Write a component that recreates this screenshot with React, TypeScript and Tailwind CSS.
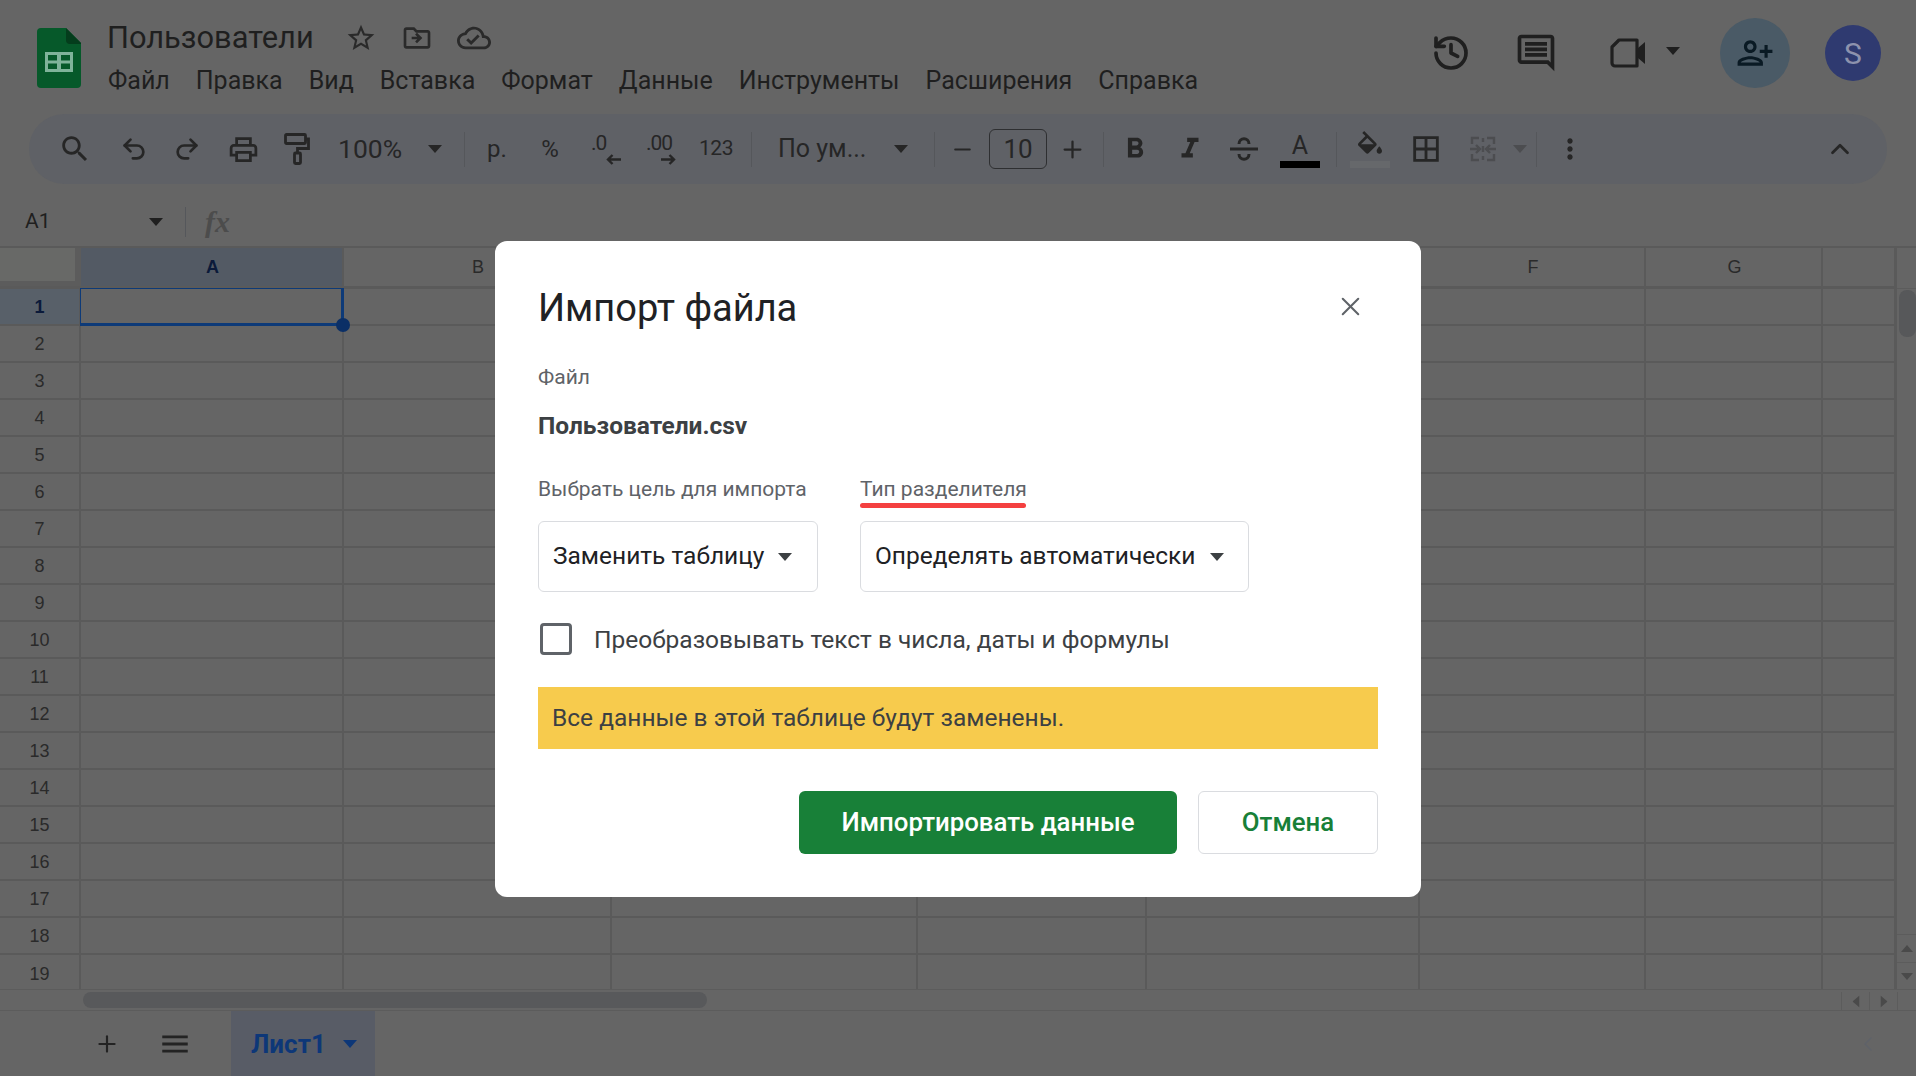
import React from "react";
import { History, Undo2, Redo2, X, ChevronUp, ChevronLeft, Plus, Minus } from "lucide-react";

const P: Record<string, string> = {
  search: "M15.5 14h-.79l-.28-.27C15.41 12.59 16 11.11 16 9.5 16 5.91 13.09 3 9.5 3S3 5.91 3 9.5 5.91 16 9.5 16c1.61 0 3.09-.59 4.23-1.57l.27.28v.79l5 4.99L20.49 19l-4.99-5zm-6 0C7.01 14 5 11.99 5 9.5S7.01 5 9.5 5 14 7.01 14 9.5 11.99 14 9.5 14z",
  print: "M19 8h-1V3H6v5H5c-1.66 0-3 1.34-3 3v6h4v4h12v-4h4v-6c0-1.66-1.34-3-3-3zM8 5h8v3H8V5zm8 14H8v-4h8v4zm2-4v-2H6v2H4v-4c0-.55.45-1 1-1h14c.55 0 1 .45 1 1v4h-2z",
  bold: "M15.6 10.79c.97-.67 1.65-1.77 1.65-2.79 0-2.26-1.75-4-4-4H7v14h7.04c2.09 0 3.71-1.7 3.71-3.79 0-1.52-.86-2.82-2.15-3.42zM10 6.5h3c.83 0 1.5.67 1.5 1.5s-.67 1.5-1.5 1.5h-3v-3zm3.5 9H10v-3h3.5c.83 0 1.5.67 1.5 1.5s-.67 1.5-1.5 1.5z",
  italic: "M10 4v3h2.21l-3.42 8H6v3h8v-3h-2.21l3.42-8H18V4z",
  fill: "M16.56 8.94L7.62 0 6.21 1.41l2.38 2.38-5.15 5.15c-.59.59-.59 1.54 0 2.12l5.5 5.5c.29.29.68.44 1.06.44s.77-.15 1.06-.44l5.5-5.5c.59-.58.59-1.53 0-2.12zM5.21 10L10 5.21 14.79 10H5.21zM19 11.5s-2 2.17-2 3.5c0 1.1.9 2 2 2s2-.9 2-2c0-1.33-2-3.5-2-3.5z",
  borders: "M3 3v18h18V3H3zm8 16H5v-6h6v6zm0-8H5V5h6v6zm8 8h-6v-6h6v6zm0-8h-6V5h6v6z",
  star: "M22 9.24l-7.19-.62L12 2 9.19 8.63 2 9.24l5.46 4.73L5.82 21 12 17.27 18.18 21l-1.63-7.03L22 9.24zM12 15.4l-3.76 2.27 1-4.28-3.32-2.88 4.38-.38L12 6.1l1.71 4.04 4.38.38-3.32 2.88 1 4.28L12 15.4z",
  folder: "M20 6h-8l-2-2H4c-1.1 0-2 .9-2 2v12c0 1.1.9 2 2 2h16c1.1 0 2-.9 2-2V8c0-1.1-.9-2-2-2zm0 12H4V6h5.17l2 2H20v10zM12.16 13H8v-2h4.17l-1.59-1.59L12 8l4 4-4 4-1.41-1.41z",
  cloud: "M19.35 10.04C18.67 6.59 15.64 4 12 4 9.11 4 6.6 5.64 5.35 8.04 2.34 8.36 0 10.91 0 14c0 3.31 2.69 6 6 6h13c2.76 0 5-2.24 5-5 0-2.64-2.05-4.78-4.65-4.96zM19 18H6c-2.21 0-4-1.79-4-4 0-2.05 1.53-3.76 3.56-3.97l1.07-.11.5-.95C8.08 7.14 9.94 6 12 6c2.62 0 4.88 1.86 5.39 4.43l.3 1.5 1.53.11c1.56.1 2.78 1.41 2.78 2.96 0 1.65-1.35 3-3 3zm-9-3.82l-2.09-2.09L6.5 13.5 10 17l6.01-6.01-1.41-1.41z",
  comment: "M21.99 4c0-1.1-.89-2-1.99-2H4c-1.1 0-2 .9-2 2v12c0 1.1.9 2 2 2h14l4 4-.01-18zM20 4v13.17L18.83 16H4V4h16zM6 12h12v2H6zm0-3h12v2H6zm0-3h12v2H6z",
  person: "M15 12c2.21 0 4-1.79 4-4s-1.79-4-4-4-4 1.79-4 4 1.79 4 4 4zm0-6c1.1 0 2 .9 2 2s-.9 2-2 2-2-.9-2-2 .9-2 2-2zm0 8c-2.67 0-8 1.34-8 4v2h16v-2c0-2.66-5.33-4-8-4zm-6 4c.22-.72 3.31-2 6-2 2.7 0 5.8 1.29 6 2H9zm-3-3v-3h3v-2H6V7H4v3H1v2h3v3h2z",
  vert: "M12 8c1.1 0 2-.9 2-2s-.9-2-2-2-2 .9-2 2 .9 2 2 2zm0 2c-1.1 0-2 .9-2 2s.9 2 2 2 2-.9 2-2-.9-2-2-2zm0 6c-1.1 0-2 .9-2 2s.9 2 2 2 2-.9 2-2-.9-2-2-2z",
  menu: "M3 18h18v-2H3v2zm0-5h18v-2H3v2zm0-7v2h18V6H3z",
};

function Mi({ d, size, className = "" }: { d: string; size: number; className?: string }) {
  return (
    <svg width={size} height={size} viewBox="0 0 24 24" fill="currentColor" fillRule="evenodd" className={className}>
      <path d={P[d]} />
    </svg>
  );
}

function Tri({ w = 14, h = 8, className = "" }: { w?: number; h?: number; className?: string }) {
  return (
    <svg width={w} height={h} viewBox="0 0 14 8" preserveAspectRatio="none" fill="currentColor" className={className}>
      <path d="M0 0h14L7 8z" />
    </svg>
  );
}

function Logo() {
  return (
    <svg width="44" height="60" viewBox="0 0 44 60">
      <path d="M4 0h25l15 15v41a4 4 0 0 1-4 4H4a4 4 0 0 1-4-4V4a4 4 0 0 1 4-4z" fill="#06592a" />
      <path d="M29 0l15 15v1H33a4 4 0 0 1-4-4z" fill="#043d1c" />
      <path d="M8 24h28v20H8zm3 3v5.500h9V27zm13 0v5.500h9V27zm-13 8.500V41h9v-5.500zm13 0V41h9v-5.500z" fill="#7fb39a" fillRule="evenodd" />
    </svg>
  );
}

function Meet() {
  return (
    <svg width="38" height="32" viewBox="0 0 38 32" fill="none" className="text-[#1f1f1f]">
      <path d="M10 3h18v26H6a3 3 0 0 1-3-3V10z" stroke="currentColor" strokeWidth="3.2" strokeLinejoin="round" />
      <path d="M29 11l7-6v22l-7-6z" fill="currentColor" />
    </svg>
  );
}

function Merge() {
  return (
    <svg width="28" height="28" viewBox="0 0 28 28" fill="none" stroke="currentColor" strokeWidth="2.4" className="text-[#4c4d50]">
      <path d="M10 3H3v6M3 19v6h7M18 3h7v6M25 19v6h-7" />
      <path d="M1 14h10M7 10l4 4-4 4M27 14H17M21 10l-4 4 4 4M14 3v4M14 11v6M14 21v4" />
    </svg>
  );
}

function PaintRoller() {
  return (
    <svg width="26" height="32" viewBox="0 0 26 32" fill="none" stroke="currentColor" strokeWidth="2.8">
      <rect x="1.500" y="1.500" width="20" height="9" rx="1" />
      <path d="M22 6h2.500v9.500H13.500V20" />
      <rect x="10.500" y="20" width="6" height="10.500" rx="1" />
    </svg>
  );
}

function Strike() {
  return (
    <svg width="30" height="30" viewBox="0 0 30 30" fill="none" stroke="currentColor" strokeWidth="3">
      <path d="M1 15h28" />
      <path d="M10 10c0-7 10-7 10 0" />
      <path d="M10 20c0 7 10 7 10 0" />
    </svg>
  );
}

function DecLeft() {
  return (
    <div className="flex w-[34px] flex-col items-start pl-[2px]">
      <span className="text-[21px] leading-[20px] tracking-[-1px]">.0</span>
      <svg width="15" height="11" viewBox="0 0 15 11" fill="none" stroke="currentColor" strokeWidth="2.4" className="ml-[15px] mt-[1px]">
        <path d="M15 5.500H2M6.500 1 2 5.500 6.500 10" />
      </svg>
    </div>
  );
}

function DecRight() {
  return (
    <div className="flex w-[34px] flex-col items-start pl-[2px]">
      <span className="text-[21px] leading-[20px] tracking-[-1px]">.00</span>
      <svg width="15" height="11" viewBox="0 0 15 11" fill="none" stroke="currentColor" strokeWidth="2.4" className="ml-[15px] mt-[1px]">
        <path d="M0 5.500h13M8.500 1 13 5.500 8.500 10" />
      </svg>
    </div>
  );
}

function Divider() {
  return <div className="h-[35px] w-px shrink-0 bg-[#55575b]" />;
}

function Cell({ w, children }: { w: string; children: React.ReactNode }) {
  return <div className={`flex shrink-0 items-center justify-center ${w}`}>{children}</div>;
}

function Toolbar() {
  return (
    <div className="mx-[29px] flex h-[70px] items-center rounded-[35px] bg-[#5f6166] pl-[18px] text-[#262626] w-[1858px]">
      <Cell w="w-[56px]"><Mi d="search" size={34} /></Cell>
      <Cell w="w-[62px]"><Undo2 size={28} strokeWidth={2.3} /></Cell>
      <Cell w="w-[44px]"><Redo2 size={28} strokeWidth={2.3} /></Cell>
      <Cell w="w-[68px]"><Mi d="print" size={33} /></Cell>
      <Cell w="w-[40px]"><PaintRoller /></Cell>
      <div className="flex w-[147px] shrink-0 items-center pl-[21px] text-[26.500px]">
        <span className="w-[66px]">100%</span>
        <Tri className="ml-[24px]" />
      </div>
      <Divider />
      <Cell w="w-[64px]"><span className="text-[24px]">р.</span></Cell>
      <Cell w="w-[42px]"><span className="text-[24px]">%</span></Cell>
      <Cell w="w-[70px]"><DecLeft /></Cell>
      <Cell w="w-[40px]"><DecRight /></Cell>
      <Cell w="w-[70px]"><span className="text-[21px] tracking-[-0.5px]">123</span></Cell>
      <Divider />
      <div className="flex w-[182px] shrink-0 items-center pl-[26px] text-[25px]">
        <span className="w-[88px] whitespace-nowrap">По ум...</span>
        <Tri className="ml-[28px]" />
      </div>
      <Divider />
      <Cell w="w-[54px]"><Minus size={25} strokeWidth={2} /></Cell>
      <div className="flex h-[40px] w-[58px] shrink-0 items-center justify-center rounded-[6px] border border-[#2e2f31] text-[26px]">10</div>
      <Cell w="w-[50px]"><Plus size={27} strokeWidth={2} /></Cell>
      <div className="w-[6px] shrink-0" />
      <Divider />
      <Cell w="w-[62px]"><Mi d="bold" size={34} /></Cell>
      <Cell w="w-[48px]"><Mi d="italic" size={34} /></Cell>
      <Cell w="w-[60px]"><Strike /></Cell>
      <div className="flex w-[52px] shrink-0 flex-col items-center">
        <span className="h-[30px] text-[25px] leading-[30px]">A</span>
        <div className="h-[7px] w-[40px] bg-black" />
      </div>
      <div className="w-[10px] shrink-0" />
      <Divider />
      <div className="flex w-[66px] shrink-0 flex-col items-center">
        <div className="h-[30px]"><Mi d="fill" size={32} /></div>
        <div className="h-[7px] w-[40px] bg-[#66686b]" />
      </div>
      <Cell w="w-[46px]"><Mi d="borders" size={34} /></Cell>
      <div className="flex w-[87px] shrink-0 items-center pl-[20px]">
        <Merge />
        <Tri className="ml-[16px] text-[#4c4d50]" />
      </div>
      <Divider />
      <Cell w="w-[66px]"><Mi d="vert" size={32} /></Cell>
      <div className="ml-auto mr-[32px]">
        <ChevronUp size={30} strokeWidth={2.2} />
      </div>
    </div>
  );
}

const COLS = ["A", "B", "C", "D", "E", "F", "G", ""];
const WIDTHS = ["w-[263px]", "w-[268px]", "w-[306px]", "w-[229px]", "w-[273px]", "w-[226px]", "w-[177px]", "w-[73px]"];
const ROWS = Array.from({ length: 19 }, (_, i) => i + 1);

function Sheet() {
  return (
    <div className="flex h-[743px] overflow-hidden text-[#2a2a2a]" style={{ fontFamily: '"Liberation Sans", Arial, sans-serif' }}>
      <div className="w-[1896px] shrink-0">
        <div className="flex h-[43px] border-t-2 border-b-[3px] border-[#5a5a5a]">
          <div className="relative w-[81px] shrink-0 bg-[#5c5c5c]">
            <div className="h-[33px] w-[75px] bg-[#686967]" />
          </div>
          {COLS.map((c, i) => (
            <div
              key={i}
              className={`flex shrink-0 items-center justify-center border-r-2 border-[#5a5a5a] pl-[2px] text-[18px] ${WIDTHS[i]} ${
                i === 0 ? "bg-[#535a64] font-bold text-[#0b1a3a]" : ""
              }`}
            >
              {c}
            </div>
          ))}
        </div>
        {ROWS.map((r) => (
          <div key={r} className="flex h-[37px] border-b-2 border-[#5a5a5a] last:border-b-0">
            <div
              className={`flex w-[81px] shrink-0 items-center justify-center border-r-2 border-[#5a5a5a] pt-[2px] text-[18px] ${
                r === 1 ? "bg-[#586069] font-bold text-[#0b1a3a]" : ""
              }`}
            >
              {r}
            </div>
            {WIDTHS.map((w, i) => (
              <div key={i} className={`relative shrink-0 border-r-2 border-[#5a5a5a] ${w}`}>
                {r === 1 && i === 0 && (
                  <div className="absolute -top-px -left-px z-10 h-[38px] w-[264px] border border-r-[3px] border-b-[3px] border-[#0d3a78]">
                    <div className="absolute -right-[9px] -bottom-[9px] h-[14px] w-[14px] rounded-full bg-[#0b2f66]" />
                  </div>
                )}
              </div>
            ))}
          </div>
        ))}
      </div>
      <div className="flex w-[20px] shrink-0 flex-col border-t-2 border-l border-[#5a5a5a]">
        <div className="h-[41px] border-b border-[#5c5c5c]" />
        <div className="ml-[2px] mt-[1px] h-[47px] w-[17px] rounded-[8px] bg-[#57585a]" />
        <div className="flex-1" />
        <div className="flex h-[28px] items-center justify-center border-t border-[#5c5c5c] text-[#4a4a4a]">
          <Tri w={12} h={7} className="rotate-180" />
        </div>
        <div className="flex h-[27px] items-center justify-center border-t border-[#5c5c5c] text-[#4a4a4a]">
          <Tri w={12} h={7} />
        </div>
      </div>
    </div>
  );
}

function HScroll() {
  return (
    <div className="flex h-[22px] items-start border-t border-b border-[#5c5c5c] pt-[2px]">
      <div className="ml-[83px] h-[16px] w-[624px] rounded-[8px] bg-[#58595b]" />
      <div className="ml-auto flex h-[18px] text-[#4a4a4a]">
        <div className="flex w-[28px] items-center justify-center border-l border-[#5c5c5c]">
          <Tri w={12} h={7} className="rotate-90" />
        </div>
        <div className="flex w-[28px] items-center justify-center border-l border-[#5c5c5c]">
          <Tri w={12} h={7} className="-rotate-90" />
        </div>
        <div className="w-[19px] border-l border-[#5c5c5c]" />
      </div>
    </div>
  );
}

function Tabs() {
  return (
    <div className="flex h-[65px] items-center text-[#232323]">
      <Plus size={26} strokeWidth={2} className="ml-[94px]" />
      <Mi d="menu" size={34} className="ml-[38px]" />
      <div className="ml-[39px] flex h-full w-[144px] items-center bg-[#585c66] pl-[20px] text-[#0d3778]">
        <span className="text-[26px] font-bold leading-none">Лист1</span>
        <Tri w={14} h={8} className="ml-[17px]" />
      </div>
      <div className="ml-auto mr-[36px] text-[#5f6269]">
        <ChevronLeft size={24} strokeWidth={1.5} />
      </div>
    </div>
  );
}

function Select({ text, w }: { text: string; w: string }) {
  return (
    <div className={`flex h-[71px] items-center rounded-[6px] border border-[#dadce0] pl-[14px] text-[24.500px] text-[#202124] ${w}`}>
      <span className="whitespace-nowrap">{text}</span>
      <Tri className="ml-[14px] text-[#3c4043]" />
    </div>
  );
}

function Modal() {
  return (
    <div className="absolute top-[241px] left-[495px] h-[656px] w-[926px] rounded-[12px] bg-white pl-[43px] pr-[43px] pt-[37px]">
      <div className="flex items-center justify-between pr-[12px]">
        <h1 className="text-[38px] leading-[60px] text-[#202124]">Импорт файла</h1>
        <X size={31} strokeWidth={1.6} className="-mt-[3px] text-[#5f6368]" />
      </div>
      <div className="mt-[27px] text-[21px] leading-[24px] text-[#5f6368]">Файл</div>
      <div className="mt-[22px] text-[24.500px] font-bold leading-[30px] text-[#3c4043]">Пользователи.csv</div>
      <div className="mt-[36px] flex gap-[42px]">
        <div className="w-[280px]">
          <div className="text-[21px] leading-[24px] text-[#5f6368]">Выбрать цель для импорта</div>
          <div className="mt-[20px]"><Select text="Заменить таблицу" w="w-[280px]" /></div>
        </div>
        <div className="w-[389px]">
          <div className="flex flex-col items-start">
            <span className="text-[21px] leading-[24px] text-[#5f6368]">Тип разделителя</span>
            <div className="-mb-[7px] mt-[2px] h-[5px] w-[166px] rounded-full bg-[#f44040]" />
          </div>
          <div className="mt-[20px]"><Select text="Определять автоматически" w="w-[389px]" /></div>
        </div>
      </div>
      <div className="mt-[31px] flex items-center">
        <div className="-mt-[2px] ml-[2px] h-[32px] w-[32px] rounded-[4px] border-[3px] border-[#5f6368]" />
        <span className="ml-[22px] text-[24.500px] leading-[34px] text-[#3c4043]">Преобразовывать текст в числа, даты и формулы</span>
      </div>
      <div className="mt-[30px] flex h-[62px] items-center bg-[#f7cb4d] pl-[14px] text-[24.500px] text-[#3c4043]">
        Все данные в этой таблице будут заменены.
      </div>
      <div className="mt-[42px] flex justify-end gap-[21px]">
        <div className="flex h-[63px] w-[378px] items-center justify-center rounded-[6px] bg-[#188038] text-[25.800px] font-medium text-white">
          Импортировать данные
        </div>
        <div className="flex h-[63px] w-[180px] items-center justify-center rounded-[6px] border border-[#dadce0] text-[25.800px] font-medium text-[#188038]">
          Отмена
        </div>
      </div>
    </div>
  );
}

export default function App() {
  return (
    <div className="relative h-[1076px] w-[1916px] overflow-hidden bg-[#656565]" style={{ fontFamily: 'Roboto, "Noto Sans", sans-serif' }}>
      <header className="flex h-[114px] text-[#1f1f1f]">
        <div className="ml-[37px] mt-[28px] w-[70px] shrink-0"><Logo /></div>
        <div className="shrink-0">
          <div className="mt-[16px] flex h-[44px] items-center">
            <span className="text-[30.800px] leading-none">Пользователи</span>
            <div className="ml-[31px] flex items-center gap-[24px] text-[#2a2a2a]">
              <Mi d="star" size={32} />
              <Mi d="folder" size={32} />
              <Mi d="cloud" size={34} />
            </div>
          </div>
          <nav className="ml-[1px] mt-[4px] flex gap-[26px] text-[25px] leading-[34px]">
            {["Файл", "Правка", "Вид", "Вставка", "Формат", "Данные", "Инструменты", "Расширения", "Справка"].map((m) => (
              <span key={m}>{m}</span>
            ))}
          </nav>
        </div>
        <div className="ml-auto mr-[35px] mt-[18px] flex h-[70px] items-center text-[#1f1f1f]">
          <History size={40} strokeWidth={2.2} />
          <Mi d="comment" size={44} className="ml-[43px]" />
          <div className="ml-[51px]"><Meet /></div>
          <Tri className="ml-[19px] -mt-[4px]" />
          <div className="ml-[40px] flex h-[70px] w-[70px] items-center justify-center rounded-full bg-[#4a5a66] text-[#0a1a24]">
            <Mi d="person" size={38} className="-scale-x-100" />
          </div>
          <div className="ml-[35px] flex h-[56px] w-[56px] items-center justify-center rounded-full bg-[#2f3a70] text-[30px] text-[#8d92ad]">S</div>
        </div>
      </header>
      <Toolbar />
      <div className="flex h-[62px] items-center pt-[14px] text-[#1f1f1f]">
        <span className="ml-[25px] w-[124px] text-[21px]">A1</span>
        <Tri />
        <div className="ml-[22px] h-[30px] w-px bg-[#55575b]" />
        <span className="ml-[19px] text-[30px] font-bold italic leading-none text-[#4c4c4c]" style={{ fontFamily: '"Liberation Serif", serif' }}>fx</span>
      </div>
      <Sheet />
      <HScroll />
      <Tabs />
      <Modal />
    </div>
  );
}
